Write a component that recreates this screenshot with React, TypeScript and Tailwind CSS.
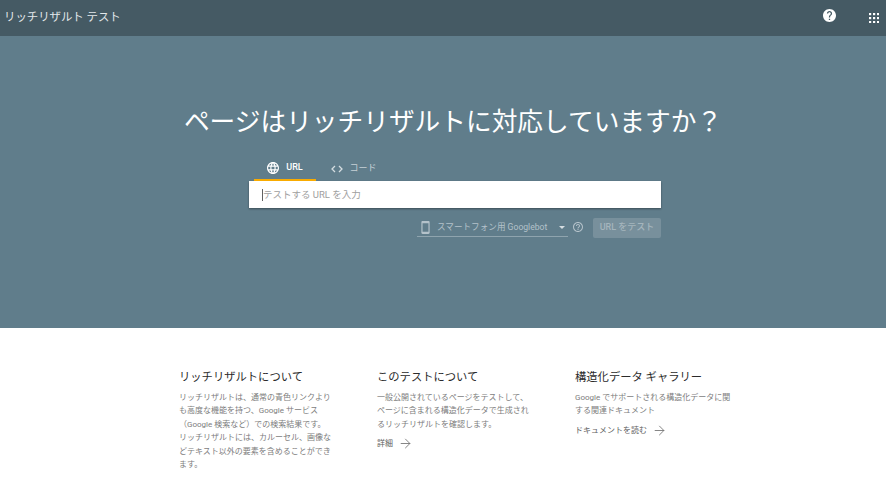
import React from 'react';
import { ArrowRight } from 'lucide-react';

const font = { fontFamily: '"Roboto", "Noto Sans CJK JP", sans-serif' };

const GridIcon = () => (
  <svg width="10" height="10" viewBox="0 0 10 10" fill="#fff">
    {[0, 4, 8].map((y) =>
      [0, 4, 8].map((x) => <rect key={`${x}-${y}`} x={x} y={y} width="2.2" height="2.2" />)
    )}
  </svg>
);

const HelpFilled = () => (
  <svg width="13" height="13" viewBox="2 2 20 20">
    <path
      fill="#fff"
      d="M12 2C6.48 2 2 6.48 2 12s4.48 10 10 10 10-4.48 10-10S17.52 2 12 2zm1 17h-2v-2h2v2zm2.07-7.75l-.9.92C13.45 12.9 13 13.5 13 15h-2v-.5c0-1.1.45-2.1 1.17-2.83l1.24-1.26c.37-.36.59-.86.59-1.41 0-1.1-.9-2-2-2s-2 .9-2 2H8c0-2.21 1.79-4 4-4s4 1.79 4 4c0 .88-.36 1.68-.93 2.25z"
    />
  </svg>
);

const HelpOutline = () => (
  <svg width="10" height="10" viewBox="2 2 20 20">
    <path
      fill="#b4c2ca"
      d="M11 18h2v-2h-2v2zm1-16C6.48 2 2 6.48 2 12s4.48 10 10 10 10-4.48 10-10S17.52 2 12 2zm0 18c-4.41 0-8-3.59-8-8s3.59-8 8-8 8 3.59 8 8-3.59 8-8 8zm0-14c-2.21 0-4 1.79-4 4h2c0-1.1.9-2 2-2s2 .9 2 2c0 2-3 1.75-3 5h2c0-2.25 3-2.5 3-5 0-2.21-1.79-4-4-4z"
    />
  </svg>
);

const Globe = () => (
  <svg width="12" height="12" viewBox="2 2 20 20">
    <path
      fill="#fff"
      d="M11.99 2C6.47 2 2 6.48 2 12s4.47 10 9.99 10C17.52 22 22 17.52 22 12S17.52 2 11.99 2zm6.93 6h-2.95c-.32-1.25-.78-2.45-1.38-3.56 1.84.63 3.37 1.91 4.33 3.56zM12 4.04c.83 1.2 1.48 2.53 1.91 3.96h-3.82c.43-1.43 1.08-2.76 1.91-3.96zM4.26 14C4.1 13.36 4 12.69 4 12s.1-1.36.26-2h3.38c-.08.66-.14 1.32-.14 2 0 .68.06 1.34.14 2H4.26zm.82 2h2.95c.32 1.25.78 2.45 1.38 3.56-1.84-.63-3.37-1.9-4.33-3.56zm2.95-8H5.08c.96-1.66 2.49-2.93 4.33-3.56C8.81 5.55 8.35 6.75 8.03 8zM12 19.96c-.83-1.2-1.48-2.53-1.91-3.96h3.82c-.43 1.43-1.08 2.76-1.91 3.96zM14.34 14H9.66c-.09-.66-.16-1.32-.16-2 0-.68.07-1.35.16-2h4.68c.09.65.16 1.32.16 2 0 .68-.07 1.34-.16 2zm.25 5.56c.6-1.11 1.06-2.31 1.38-3.56h2.95c-.96 1.65-2.49 2.93-4.33 3.56zM16.36 14c.08-.66.14-1.32.14-2 0-.68-.06-1.34-.14-2h3.38c.16.64.26 1.31.26 2s-.1 1.36-.26 2h-3.38z"
    />
  </svg>
);

const CodeIcon = () => (
  <svg width="12" height="8" viewBox="0 0 12 8" fill="none" stroke="#d5dde1" strokeWidth="1.3">
    <path d="M4 1 1 4l3 3" />
    <path d="m8 1 3 3-3 3" />
  </svg>
);

const Phone = () => (
  <svg width="9" height="13" viewBox="5 1 14 22">
    <path
      fill="#b4c2ca"
      d="M17 1.01 7 1c-1.1 0-2 .9-2 2v18c0 1.1.9 2 2 2h10c1.1 0 2-.9 2-2V3c0-1.1-.9-1.99-2-1.99zM17 19H7V5h10v14z"
    />
  </svg>
);

const InfoColumn = ({
  title,
  lines,
  link,
  width,
}: {
  title: string;
  lines: string[];
  link?: string;
  width: string;
}) => (
  <div className={width}>
    <h3 className="text-[11.3px] leading-[16px] text-[#2b2b2b]">{title}</h3>
    <div className="mt-[5px] text-[8px] leading-[13.4px] text-[#7d7d7d] whitespace-nowrap">
      {lines.map((line) => (
        <p key={line}>{line}</p>
      ))}
    </div>
    {link && (
      <div className="mt-[5px] flex items-center gap-[5px] text-[8px] leading-[13px] text-[#616161]">
        <span>{link}</span>
        <ArrowRight size={15} strokeWidth={1.4} className="text-[#757575]" />
      </div>
    )}
  </div>
);

export default function App() {
  return (
    <div className="w-[886px] h-[490px] overflow-hidden bg-white flex flex-col" style={font}>
      <header className="h-[36px] bg-[#455a64] flex items-center shadow-sm pl-[4px]">
        <span className="text-[11.4px] text-[#e3e8ea]">リッチリザルト テスト</span>
        <div className="ml-auto flex items-center">
          <div className="mt-[-6px]">
            <HelpFilled />
          </div>
          <div className="ml-[33px] mr-[7px]">
            <GridIcon />
          </div>
        </div>
      </header>

      <section className="h-[292px] bg-[#607d8b] flex flex-col items-center pl-[20px]">
        <h1 className="mt-[67px] text-[25.7px] leading-[38px] text-white whitespace-nowrap">
          ページはリッチリザルトに対応していますか？
        </h1>

        <div className="w-[412px] mt-[15px] ml-[4px]">
          <div className="flex items-end h-[25px] pl-[5px]">
            <div className="w-[62px] h-[25px] border-b-2 border-[#f9ab00] flex items-center justify-center gap-[7px] text-[9px] font-medium text-white">
              <Globe />
              <span>URL</span>
            </div>
            <div className="w-[76px] h-[25px] flex items-center justify-center gap-[6px] text-[9px] text-[#c5d0d6]">
              <CodeIcon />
              <span>コード</span>
            </div>
          </div>

          <div className="h-[27px] bg-white shadow-[0_1px_2px_rgba(0,0,0,0.4)] flex items-center pl-[13px]">
            <span className="w-px h-[12px] bg-[#616161]" />
            <span className="pt-[1px] text-[9.5px] text-[#9e9e9e]">テストする URL を入力</span>
          </div>

          <div className="flex items-start justify-end mt-[10px]">
            <div className="w-[151px] h-[19px] border-b border-[#8fa4ae] flex items-center pl-[4px] pr-[3px]">
              <Phone />
              <span className="ml-[7px] text-[8.6px] text-[#b4c2ca] whitespace-nowrap">
                スマートフォン用 Googlebot
              </span>
              <span className="ml-auto w-0 h-0 border-x-[3px] border-x-transparent border-t-[3px] border-t-[#d5dde1]" />
            </div>
            <div className="ml-[5px] mr-[10px] mt-[4px]">
              <HelpOutline />
            </div>
            <div className="w-[68px] h-[20px] bg-[#78909c] rounded-[2px] flex items-center justify-center text-[9px] font-medium text-[#a5b5bd]">
              URL をテスト
            </div>
          </div>
        </div>
      </section>

      <section className="flex-1 flex pl-[179px] pt-[42px]">
        <InfoColumn
          width="w-[198px]"
          title="リッチリザルトについて"
          lines={[
            'リッチリザルトは、通常の青色リンクより',
            'も高度な機能を持つ、Google サービス',
            '（Google 検索など）での検索結果です。',
            'リッチリザルトには、カルーセル、画像な',
            'どテキスト以外の要素を含めることができ',
            'ます。',
          ]}
        />
        <InfoColumn
          width="w-[198px]"
          title="このテストについて"
          lines={[
            '一般公開されているページをテストして、',
            'ページに含まれる構造化データで生成され',
            'るリッチリザルトを確認します。',
          ]}
          link="詳細"
        />
        <InfoColumn
          width="w-[170px]"
          title="構造化データ ギャラリー"
          lines={['Google でサポートされる構造化データに関', 'する関連ドキュメント']}
          link="ドキュメントを読む"
        />
      </section>
    </div>
  );
}
